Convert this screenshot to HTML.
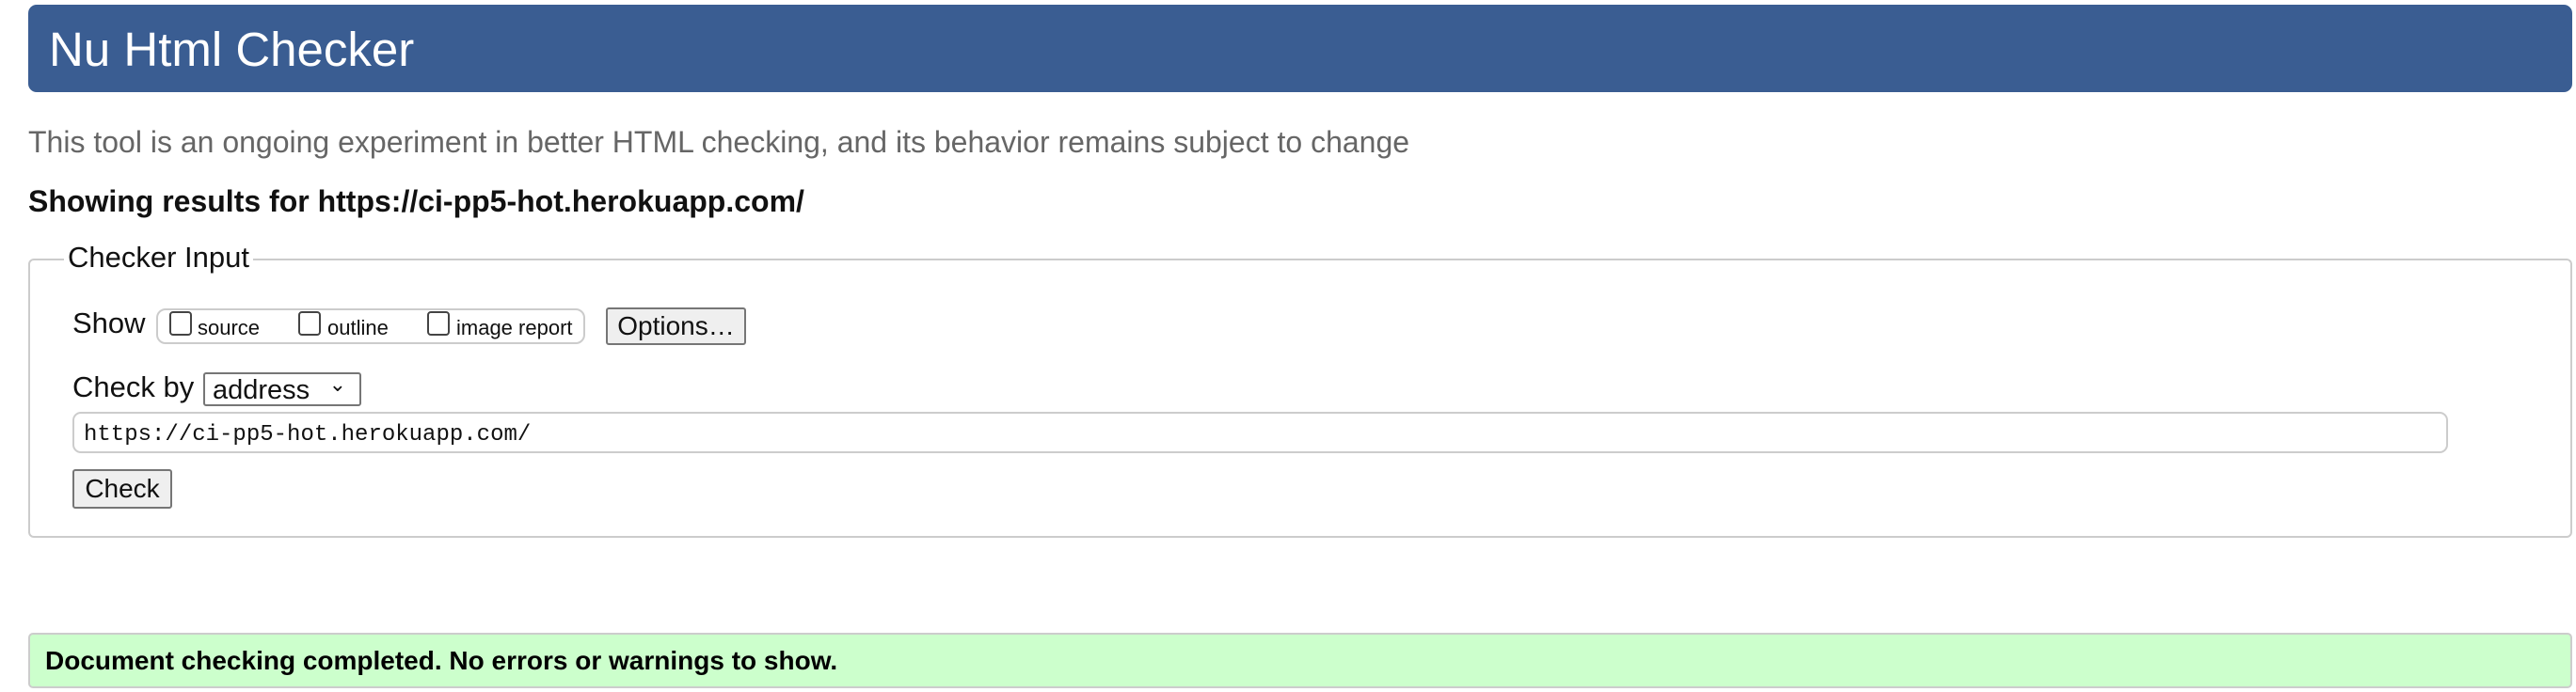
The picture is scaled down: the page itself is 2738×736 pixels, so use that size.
<!DOCTYPE html>
<html><head><meta charset="utf-8"><style>
*{box-sizing:border-box;margin:0;padding:0}
body{width:2738px;height:736px;background:#fff;font-family:"Liberation Sans",Arial,sans-serif;position:relative;overflow:hidden;color:#111}
.a{position:absolute;white-space:nowrap}
#hdr{left:30px;top:5px;width:2704px;height:93px;background:#3a5d92;border-radius:9px}
#hdr span{position:absolute;left:22px;top:18px;font-size:51px;color:#fff}
#intro{left:30px;top:133px;font-size:32px;color:#666}
#show{left:30px;top:196px;font-size:32px;font-weight:bold}
#fs{left:30px;top:275px;width:2704px;height:297px;border:2px solid #ccc;border-radius:6px}
#lg{left:68px;top:256px;font-size:31px;background:#fff;padding:0 4px}
.lbl{font-size:31px}
.cbg{left:166px;top:328px;width:456px;height:38px;border:2px solid #ccc;border-radius:10px}
.cb{position:absolute;width:24px;height:26px;border:2px solid #444;border-radius:4px;background:#fff}
.small{font-size:22px}
.btn{border:2px solid #767676;background:#efefef;border-radius:3px;font-size:28px;text-align:center}
#url{left:77px;top:438px;width:2525px;height:44px;border:2px solid #ccc;border-radius:9px;font-family:"Liberation Mono",monospace;font-size:24px;padding:9px 10px}
#ok{left:30px;top:673px;width:2704px;height:59px;background:#ccffcc;border:2px solid #ccc;border-radius:5px;font-size:28px;font-weight:bold;padding:12px 16px;color:#000}
</style></head><body>
<div id="hdr" class="a"><span>Nu Html Checker</span></div>
<div id="intro" class="a">This tool is an ongoing experiment in better HTML checking, and its behavior remains subject to change</div>
<div id="show" class="a">Showing results for https://ci-pp5-hot.herokuapp.com/</div>
<div id="fs" class="a"></div>
<div id="lg" class="a">Checker Input</div>
<div class="a lbl" style="left:77px;top:326px">Show</div>
<div class="a cbg"></div>
<div class="cb" style="left:180px;top:331px"></div><div class="a small" style="left:210px;top:336px">source</div>
<div class="cb" style="left:317px;top:331px"></div><div class="a small" style="left:348px;top:336px">outline</div>
<div class="cb" style="left:454px;top:331px"></div><div class="a small" style="left:485px;top:336px">image report</div>
<div class="a btn" style="left:644px;top:327px;width:149px;height:40px;line-height:36px">Options…</div>
<div class="a lbl" style="left:77px;top:394px">Check by</div>
<div class="a" style="left:216px;top:396px;width:168px;height:36px;border:2px solid #767676;border-radius:3px;font-size:29px;padding:1px 8px">address<span style="position:absolute;right:14px;top:-2px;font-size:22px">&#8964;</span></div>
<div id="url" class="a">https://ci-pp5-hot.herokuapp.com/</div>
<div class="a btn" style="left:77px;top:499px;width:106px;height:42px;line-height:38px">Check</div>
<div id="ok" class="a">Document checking completed. No errors or warnings to show.</div>
</body></html>
